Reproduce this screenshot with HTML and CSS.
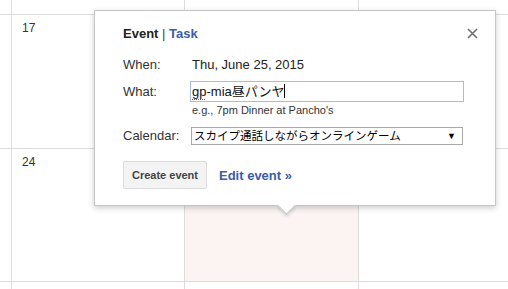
FILE: index.html
```html
<!DOCTYPE html>
<html lang="ja">
<head>
  <meta charset="UTF-8" />
  <title>Calendar | Quick add</title>
  <link rel="stylesheet" href="styles.css">
</head>
<body>

  <div class="calendar">
    <div class="cell"></div>
    <div class="cell"></div>
    <div class="cell"></div>
    <div class="cell"></div>

    <div class="cell"></div>
    <div class="cell day">17</div>
    <div class="cell"></div>
    <div class="cell"></div>

    <div class="cell"></div>
    <div class="cell day">24</div>
    <div class="cell today"></div>
    <div class="cell"></div>

    <div class="cell"></div>
    <div class="cell"></div>
    <div class="cell"></div>
    <div class="cell"></div>
  </div>

  <div class="bubble">
    <button class="close" title="Close">
      <svg width="11" height="11" viewBox="0 0 11 11">
        <path d="M1 1 L10 10 M10 1 L1 10" stroke="#707070" stroke-width="1.6" fill="none" />
      </svg>
    </button>

    <div class="tabs">
      <span class="tab-active">Event</span><span class="sep"> | </span><a class="tab-link">Task</a>
    </div>

    <div class="row when">
      <span class="label">When:</span>
      <span class="value">Thu, June 25, 2015</span>
    </div>

    <div class="row what">
      <span class="label">What:</span>
      <div class="field">
        <div class="text-input"><span class="misspelt">gp</span>-mia昼パンヤ<span class="caret"></span></div>
        <div class="hint">e.g., 7pm Dinner at Pancho's</div>
      </div>
    </div>

    <div class="row cal">
      <span class="label">Calendar:</span>
      <div class="select">
        <span>スカイプ通話しながらオンラインゲーム</span>
        <span class="arrow">▼</span>
      </div>
    </div>

    <div class="actions">
      <button class="create">Create event</button>
      <a class="edit">Edit event »</a>
    </div>
  </div>

</body>
</html>
```

FILE: styles.css
```css
* {
  box-sizing: border-box;
  margin: 0;
  padding: 0;
}

body {
  font-family: 'Liberation Sans', 'Noto Sans CJK JP', sans-serif;
  color: #222;
  background: #fff;
  width: 508px;
  height: 289px;
  overflow: hidden;
}

/* month grid behind the bubble */
.calendar {
  display: grid;
  grid-template-columns: 11px 172px 173px 1fr;
  grid-template-rows: 14px 133px 132px 1fr;
  gap: 1px;
  background: #dcdcdc;
  height: 289px;
}

.cell {
  background: #fff;
}

.cell.today {
  background: #fcf3f3;
}

.day {
  font-size: 12px;
  line-height: 14px;
  color: #333;
  padding: 6px 0 0 10px;
}

/* quick add bubble */
.bubble {
  position: absolute;
  left: 94px;
  top: 10px;
  width: 402px;
  background: #fff;
  border: 1px solid #c6c6c6;
  box-shadow: 0 2px 6px rgba(0, 0, 0, 0.2);
  padding: 15px 31px 16px 28px;
  font-size: 13px;
  line-height: 15px;
}

.bubble::after {
  content: "";
  position: absolute;
  left: 185px;
  bottom: -7px;
  width: 12px;
  height: 12px;
  background: #fff;
  border-right: 1px solid #c6c6c6;
  border-bottom: 1px solid #c6c6c6;
  box-shadow: 2px 2px 3px rgba(0, 0, 0, 0.12);
  transform: rotate(45deg);
}

.close {
  position: absolute;
  top: 17px;
  right: 17px;
  width: 11px;
  height: 11px;
  background: none;
  border: none;
  cursor: pointer;
  display: flex;
}

.tabs {
  font-weight: bold;
}

.tabs .sep {
  font-weight: normal;
  color: #444;
}

.tab-link,
.edit {
  color: #3a5ca9;
  cursor: pointer;
}

.row {
  display: flex;
  align-items: flex-start;
}

.label {
  width: 67px;
  flex-shrink: 0;
  color: #333;
}

.when {
  margin-top: 16px;
}

.when .value {
  padding-left: 2px;
}

.what {
  margin-top: 9px;
}

.what .label {
  padding-top: 3px;
}

.text-input {
  width: 274px;
  height: 21px;
  border: 1px solid #a6bde2;
  padding: 0 2px 0 1px;
  line-height: 19px;
  color: #111;
  white-space: nowrap;
}

.misspelt {
  text-decoration: underline dotted #d22;
  text-decoration-thickness: 1px;
  text-underline-offset: 3px;
}

.caret {
  display: inline-block;
  width: 1px;
  height: 14px;
  background: #000;
  vertical-align: -2px;
}

.hint {
  margin-top: 2px;
  padding-left: 2px;
  font-size: 11px;
  line-height: 13px;
  color: #333;
}

.cal {
  margin-top: 10px;
}

.cal .label {
  padding-top: 1px;
}

.select {
  margin-left: 1px;
  width: 272px;
  height: 18px;
  border: 1px solid #a9a9a9;
  display: flex;
  justify-content: space-between;
  align-items: center;
  padding: 0 6px 0 2px;
  font-size: 11.5px;
  line-height: 16px;
  color: #000;
}

.select .arrow {
  font-size: 9px;
}

.actions {
  margin-top: 16px;
  display: flex;
  align-items: center;
  gap: 12px;
}

.create {
  height: 28px;
  width: 84px;
  background: #f3f3f3;
  border: 1px solid #dcdcdc;
  border-radius: 2px;
  font-family: inherit;
  font-size: 11px;
  font-weight: bold;
  color: #444;
  cursor: pointer;
}

.edit {
  font-weight: bold;
  font-size: 13px;
}
```
